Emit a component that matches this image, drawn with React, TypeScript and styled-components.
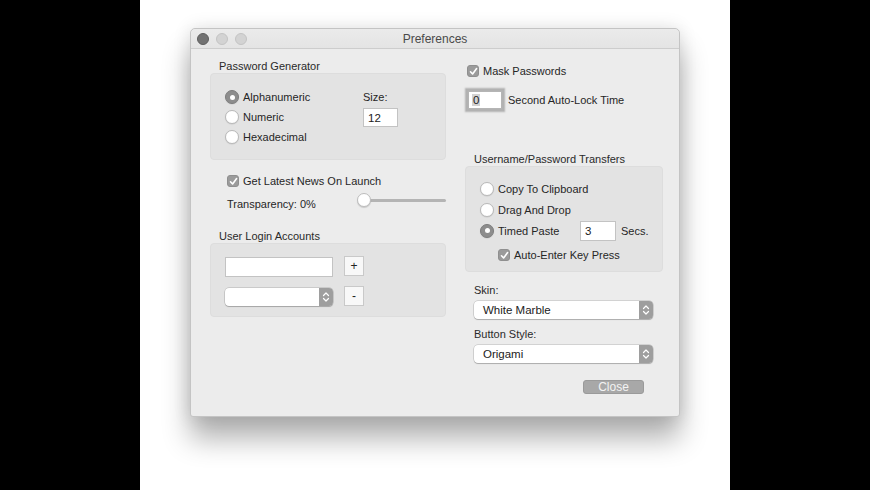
import styled, { createGlobalStyle } from 'styled-components'

const GlobalStyle = createGlobalStyle`
  html, body {
    margin: 0;
    padding: 0;
    background: #000;
  }
  body {
    font-family: 'Liberation Sans', Arial, sans-serif;
    font-size: 11px;
    color: #262626;
  }
`

const Stage = styled.div`
  width: 870px;
  height: 490px;
  display: flex;
  justify-content: center;
  background: #000;
`

const Canvas = styled.div`
  width: 590px;
  height: 490px;
  box-sizing: border-box;
  padding: 28px 0 0 50px;
  background: #fff;
  overflow: hidden;
`

const Window = styled.div`
  width: 490px;
  height: 389px;
  box-sizing: border-box;
  display: flex;
  flex-direction: column;
  background: #ececec;
  border: 1px solid #c4c4c4;
  border-radius: 5px 5px 3px 3px;
  box-shadow: 0 22px 28px rgba(0, 0, 0, 0.3), 0 0 18px rgba(0, 0, 0, 0.12);
`

const TitleBar = styled.div`
  height: 18px;
  padding: 1px 6px 0;
  display: grid;
  grid-template-columns: 1fr auto 1fr;
  align-items: center;
  background: linear-gradient(#ebebeb, #e4e4e4);
  border-bottom: 1px solid #cdcdcd;
  border-radius: 5px 5px 0 0;
`

const Lights = styled.div`
  display: flex;
  gap: 7px;
`

const Light = styled.span<{ $dark?: boolean }>`
  width: 12px;
  height: 12px;
  box-sizing: border-box;
  border-radius: 50%;
  background: ${p => (p.$dark ? '#727272' : '#d3d3d3')};
  border: 1px solid ${p => (p.$dark ? '#5e5e5e' : '#c4c4c4')};
`

const Title = styled.div`
  font-size: 12px;
  color: #4a4a4a;
`

const Body = styled.div`
  display: grid;
  grid-template-columns: 236px 198px;
  column-gap: 19px;
  padding-left: 19px;
  align-items: start;
`

const Column = styled.div`
  display: flex;
  flex-direction: column;
`

const SectionLabel = styled.div<{ $top: number }>`
  height: 14px;
  line-height: 14px;
  margin-top: ${p => p.$top}px;
  padding-left: 9px;
  color: #2a2a2a;
`

const GroupBox = styled.div<{ $h: number }>`
  box-sizing: border-box;
  height: ${p => p.$h}px;
  background: #e3e3e3;
  border: 1px solid #dddddd;
  border-radius: 4px;
`

const GeneratorBox = styled(GroupBox)`
  display: flex;
  padding: 13px 0 0 14px;
`

const RadioList = styled.div<{ $w?: number }>`
  display: flex;
  flex-direction: column;
  width: ${p => (p.$w ? `${p.$w}px` : 'auto')};
`

const RadioRow = styled.div<{ $h: number }>`
  height: ${p => p.$h}px;
  display: flex;
  align-items: center;
`

const RadioLabel = styled.label<{ $w?: number }>`
  display: flex;
  align-items: center;
  gap: 4px;
  width: ${p => (p.$w ? `${p.$w}px` : 'auto')};
`

const RadioDot = styled.span<{ $on?: boolean }>`
  flex: none;
  width: 14px;
  height: 14px;
  box-sizing: border-box;
  border-radius: 50%;
  display: flex;
  align-items: center;
  justify-content: center;
  background: ${p => (p.$on ? '#8d8d8d' : '#fff')};
  border: 1px solid ${p => (p.$on ? '#7d7d7d' : '#b9b9b9')};
  box-shadow: 0 0.5px 1px rgba(0, 0, 0, 0.12);

  &::after {
    content: '';
    display: ${p => (p.$on ? 'block' : 'none')};
    width: 5px;
    height: 5px;
    border-radius: 50%;
    background: #fff;
  }
`

const SizeColumn = styled.div`
  display: flex;
  flex-direction: column;
`

const SizeLabel = styled.div`
  height: 20px;
  line-height: 20px;
`

const Field = styled.div<{ $w: number; $h: number }>`
  width: ${p => p.$w}px;
  height: ${p => p.$h}px;
  box-sizing: border-box;
  display: flex;
  align-items: center;
  padding-left: 4px;
  background: #fff;
  border: 1px solid #c3c3c3;
  font-size: 11.5px;
  color: #222;
`

const SizeField = styled(Field)`
  margin-top: 1px;
`

const CheckRow = styled.label<{ $top: number; $left: number; $h?: number }>`
  display: flex;
  align-items: center;
  gap: 4px;
  height: ${p => p.$h ?? 14}px;
  margin-top: ${p => p.$top}px;
  padding-left: ${p => p.$left}px;
`

const CheckBox = styled.span`
  flex: none;
  width: 12px;
  height: 12px;
  box-sizing: border-box;
  border-radius: 3px;
  background: #9b9b9b;
  border: 1px solid #8f8f8f;
  display: flex;
  align-items: center;
  justify-content: center;
`

const SliderRow = styled.div`
  height: 20px;
  margin-top: 1px;
  display: flex;
  align-items: center;
  padding-left: 17px;
`

const SliderText = styled.span`
  margin-top: 8px;
`

const Slider = styled.div`
  margin-left: auto;
  width: 89px;
  display: flex;
  align-items: center;
`

const Knob = styled.span`
  flex: none;
  width: 14px;
  height: 14px;
  box-sizing: border-box;
  border-radius: 50%;
  background: #fff;
  border: 1px solid #bdbdbd;
  box-shadow: 0 1px 1px rgba(0, 0, 0, 0.15);
  position: relative;
  z-index: 1;
`

const Track = styled.span`
  flex: 1;
  height: 3px;
  margin-left: -2px;
  border-radius: 2px;
  background: #b4b4b4;
`

const AccountsBox = styled(GroupBox)`
  padding: 12px 0 0 14px;
`

const AccountRow = styled.div<{ $top?: number }>`
  display: flex;
  align-items: flex-start;
  gap: 11px;
  margin-top: ${p => p.$top ?? 0}px;
`

const AccountField = styled(Field)`
  margin-top: 1px;
`

const SquareButton = styled.div`
  width: 20px;
  height: 20px;
  box-sizing: border-box;
  display: flex;
  align-items: center;
  justify-content: center;
  background: #f8f8f8;
  border: 1px solid #c9c9c9;
  font-size: 12px;
  color: #222;
`

const Popup = styled.div<{ $w: number; $top: number; $left?: number }>`
  width: ${p => p.$w}px;
  height: 18px;
  margin-top: ${p => p.$top}px;
  margin-left: ${p => p.$left ?? 0}px;
  display: flex;
  background: #fff;
  border-radius: 4px;
  overflow: hidden;
  box-shadow: 0 0 0 0.5px rgba(0, 0, 0, 0.22), 0 1px 1px rgba(0, 0, 0, 0.18);
`

const PopupText = styled.span`
  flex: 1;
  padding-left: 9px;
  line-height: 18px;
  font-size: 11.5px;
  color: #222;
`

const PopupArrows = styled.span`
  width: 14px;
  display: flex;
  align-items: center;
  justify-content: center;
  background: #9e9e9e;
`

const LockRow = styled.div`
  height: 24px;
  margin-top: 10px;
  padding-left: 3px;
  display: flex;
  align-items: center;
  gap: 6px;
`

const LockField = styled(Field)`
  padding-left: 3px;
  border-color: #b5b5b5;
  box-shadow: 0 0 0 2px #b2b2b2, 0 0 1.5px 3px rgba(110, 110, 110, 0.45);
`

const Selected = styled.span`
  background: #d2d2d2;
  padding: 0 1px;
`

const TransfersBox = styled(GroupBox)`
  padding: 11px 0 0 14px;
`

const Secs = styled.span`
  margin-left: 5px;
`

const CloseButton = styled.div`
  width: 61px;
  height: 14px;
  margin: 17px 0 0 118px;
  box-sizing: border-box;
  display: flex;
  align-items: center;
  justify-content: center;
  background: #a8a8a8;
  border: 1px solid #9a9a9a;
  border-radius: 3px;
  font-size: 12px;
  color: #f3f3f3;
`

const Check = () => (
  <svg width="9" height="9" viewBox="0 0 9 9">
    <path d="M1.5 4.8 L3.6 7 L7.6 1.6" fill="none" stroke="#fff" strokeWidth="1.6" strokeLinecap="round" strokeLinejoin="round" />
  </svg>
)

const Arrows = () => (
  <svg width="8" height="12" viewBox="0 0 8 12">
    <path d="M1.5 4.5 L4 2 L6.5 4.5 M1.5 7.5 L4 10 L6.5 7.5" fill="none" stroke="#fff" strokeWidth="1.2" strokeLinecap="round" strokeLinejoin="round" />
  </svg>
)

const Radio = ({ on, label, width }: { on?: boolean; label: string; width?: number }) => (
  <RadioLabel $w={width}>
    <RadioDot $on={on} />
    {label}
  </RadioLabel>
)

export default function App() {
  return (
    <Stage>
      <GlobalStyle />
      <Canvas>
        <Window>
          <TitleBar>
            <Lights>
              <Light $dark />
              <Light />
              <Light />
            </Lights>
            <Title>Preferences</Title>
            <span />
          </TitleBar>
          <Body>
            <Column>
              <SectionLabel $top={10}>Password Generator</SectionLabel>
              <GeneratorBox $h={87}>
                <RadioList $w={138}>
                  <RadioRow $h={20}>
                    <Radio on label="Alphanumeric" />
                  </RadioRow>
                  <RadioRow $h={20}>
                    <Radio label="Numeric" />
                  </RadioRow>
                  <RadioRow $h={20}>
                    <Radio label="Hexadecimal" />
                  </RadioRow>
                </RadioList>
                <SizeColumn>
                  <SizeLabel>Size:</SizeLabel>
                  <SizeField $w={35} $h={19}>12</SizeField>
                </SizeColumn>
              </GeneratorBox>

              <CheckRow $top={13} $left={17} $h={16}>
                <CheckBox>
                  <Check />
                </CheckBox>
                Get Latest News On Launch
              </CheckRow>
              <SliderRow>
                <SliderText>Transparency: 0%</SliderText>
                <Slider>
                  <Knob />
                  <Track />
                </Slider>
              </SliderRow>

              <SectionLabel $top={19}>User Login Accounts</SectionLabel>
              <AccountsBox $h={74}>
                <AccountRow>
                  <AccountField $w={108} $h={20} />
                  <SquareButton>+</SquareButton>
                </AccountRow>
                <AccountRow $top={9}>
                  <Popup $w={108} $top={2}>
                    <PopupText />
                    <PopupArrows>
                      <Arrows />
                    </PopupArrows>
                  </Popup>
                  <SquareButton>-</SquareButton>
                </AccountRow>
              </AccountsBox>
            </Column>

            <Column>
              <CheckRow $top={15} $left={2}>
                <CheckBox>
                  <Check />
                </CheckBox>
                Mask Passwords
              </CheckRow>
              <LockRow>
                <LockField $w={34} $h={18}>
                  <Selected>0</Selected>
                </LockField>
                Second Auto-Lock Time
              </LockRow>

              <SectionLabel $top={40}>Username/Password Transfers</SectionLabel>
              <TransfersBox $h={106}>
                <RadioList>
                  <RadioRow $h={21}>
                    <Radio label="Copy To Clipboard" />
                  </RadioRow>
                  <RadioRow $h={21}>
                    <Radio label="Drag And Drop" />
                  </RadioRow>
                  <RadioRow $h={21}>
                    <Radio on label="Timed Paste" width={100} />
                    <Field $w={36} $h={20}>3</Field>
                    <Secs>Secs.</Secs>
                  </RadioRow>
                </RadioList>
                <CheckRow $top={7} $left={18}>
                  <CheckBox>
                    <Check />
                  </CheckBox>
                  Auto-Enter Key Press
                </CheckRow>
              </TransfersBox>

              <SectionLabel $top={11}>Skin:</SectionLabel>
              <Popup $w={179} $top={4} $left={9}>
                <PopupText>White Marble</PopupText>
                <PopupArrows>
                  <Arrows />
                </PopupArrows>
              </Popup>
              <SectionLabel $top={8}>Button Style:</SectionLabel>
              <Popup $w={179} $top={4} $left={9}>
                <PopupText>Origami</PopupText>
                <PopupArrows>
                  <Arrows />
                </PopupArrows>
              </Popup>
              <CloseButton>Close</CloseButton>
            </Column>
          </Body>
        </Window>
      </Canvas>
    </Stage>
  )
}
